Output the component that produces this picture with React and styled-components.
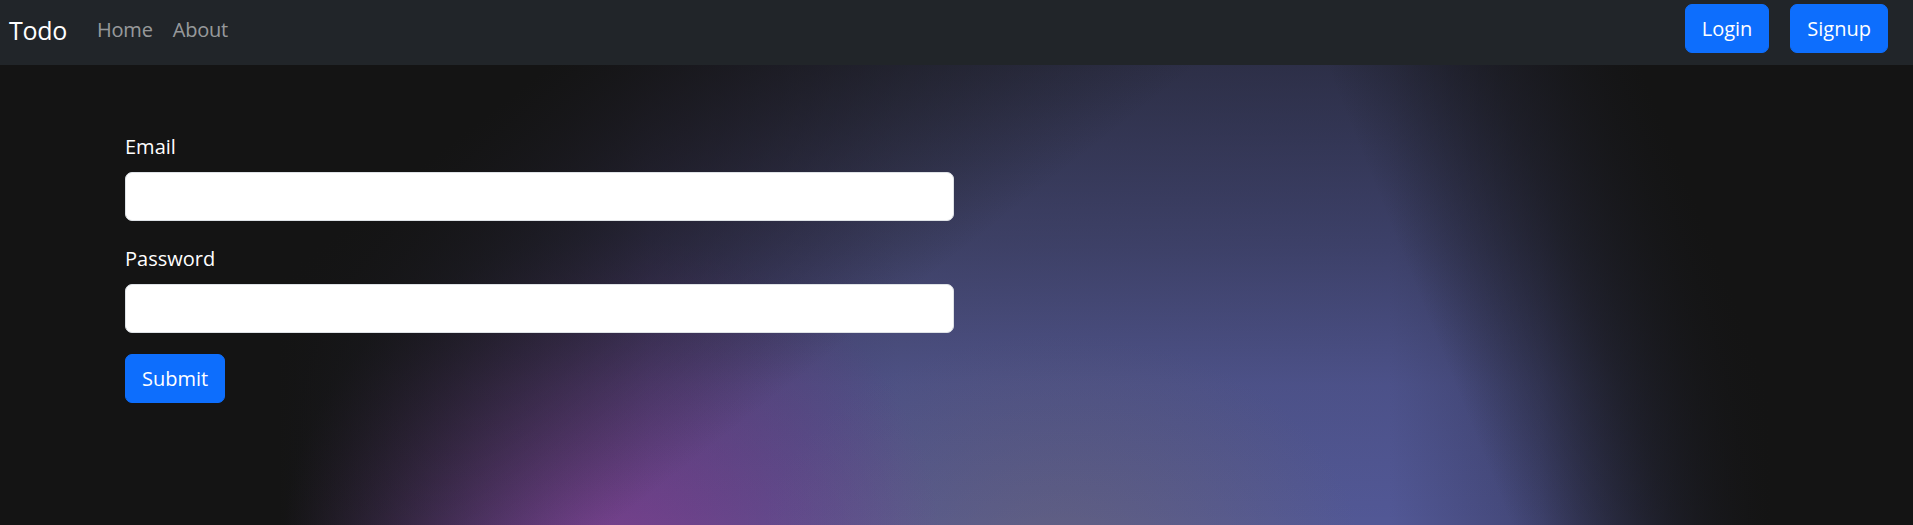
import React from "react"
import styled, { createGlobalStyle } from "styled-components"

const GlobalStyle = createGlobalStyle`
  html, body {
    margin: 0;
    padding: 0;
    background: #141414;
  }
  body {
    font-family: "Open Sans", "Liberation Sans", sans-serif;
    color: #fff;
  }
  * {
    box-sizing: border-box;
  }
`

const App = () => {
  return (
    <Page>
      <GlobalStyle />
      <NavBar>
        <NavLeft>
          <Brand href="#">Todo</Brand>
          <NavLink href="#">Home</NavLink>
          <NavLink href="#">About</NavLink>
        </NavLeft>
        <NavRight>
          <PrimaryButton type="button">Login</PrimaryButton>
          <PrimaryButton type="button">Signup</PrimaryButton>
        </NavRight>
      </NavBar>
      <Main>
        <Form onSubmit={(e) => e.preventDefault()}>
          <Field>
            <Label htmlFor="email">Email</Label>
            <Input id="email" type="email" />
          </Field>
          <Field>
            <Label htmlFor="password">Password</Label>
            <Input id="password" type="password" />
          </Field>
          <PrimaryButton type="submit">Submit</PrimaryButton>
        </Form>
      </Main>
    </Page>
  )
}

export default App

const Page = styled.div`
  min-height: 525px;
  display: flex;
  flex-direction: column;
`

const NavBar = styled.nav`
  height: 65px;
  background: #212529;
  display: flex;
  justify-content: space-between;
  align-items: flex-start;
  padding: 4px 25px 0 9px;
`

const NavLeft = styled.div`
  height: 49px;
  display: flex;
  align-items: center;
`

const NavRight = styled.div`
  display: flex;
  gap: 21px;
`

const Brand = styled.a`
  font-size: 25px;
  color: #fff;
  text-decoration: none;
  margin-right: 30px;
  margin-top: 3px;
  letter-spacing: -0.3px;
`

const NavLink = styled.a`
  font-size: 20px;
  color: rgba(255, 255, 255, 0.55);
  text-decoration: none;
  margin-right: 20px;
  margin-top: 1px;
  letter-spacing: -0.2px;
`

const PrimaryButton = styled.button`
  height: 49px;
  padding: 0 16px;
  font-family: inherit;
  font-size: 20px;
  color: #fff;
  background: #0d6efd;
  border: 1px solid #0d6efd;
  border-radius: 7px;
  cursor: pointer;
  align-self: flex-start;
`

// glow: a blue band with a pink and a grey spot at the bottom,
// darkened along diagonals on both sides and towards the top
const Main = styled.main`
  flex: 1;
  padding: 67px 0 0 125px;
  background:
    linear-gradient(142deg, #141414 22%, rgba(20, 20, 20, 0) 48%),
    linear-gradient(68deg, rgba(20, 20, 20, 0) 72%, rgba(20, 20, 20, 0.6) 80%, #141414 87%),
    linear-gradient(to bottom, rgba(20, 20, 20, 0.6) 0px, rgba(20, 20, 20, 0.35) 180px, rgba(20, 20, 20, 0.1) 320px, rgba(20, 20, 20, 0) 460px),
    radial-gradient(ellipse 330px 320px at 612px 490px, rgba(118, 64, 140, 1) 0%, rgba(118, 64, 140, 0.55) 45%, rgba(118, 64, 140, 0) 100%),
    radial-gradient(ellipse 300px 220px at 1060px 490px, rgba(98, 96, 128, 0.9) 0%, rgba(98, 96, 128, 0) 100%),
    linear-gradient(to right, rgba(20, 20, 20, 0) 280px, rgba(78, 72, 132, 1) 650px, rgba(84, 88, 145, 1) 900px, rgba(82, 88, 150, 1) 1390px, rgba(66, 70, 118, 1) 1540px, rgba(40, 42, 64, 1) 1670px, rgba(20, 20, 20, 0) 1770px),
    #141414;
`

const Form = styled.form`
  width: 829px;
  display: flex;
  flex-direction: column;
  align-items: flex-start;
`

const Field = styled.div`
  width: 100%;
  margin-bottom: 21px;
  &:first-child {
    margin-bottom: 23px;
  }
`

const Label = styled.label`
  display: block;
  font-size: 20px;
  line-height: 30px;
  color: #fff;
  margin-bottom: 10px;
`

const Input = styled.input`
  display: block;
  width: 100%;
  height: 49px;
  padding: 7px 15px;
  font-family: inherit;
  font-size: 20px;
  background: #fff;
  border: 1px solid #dee2e6;
  border-radius: 7px;
  outline: none;
`
